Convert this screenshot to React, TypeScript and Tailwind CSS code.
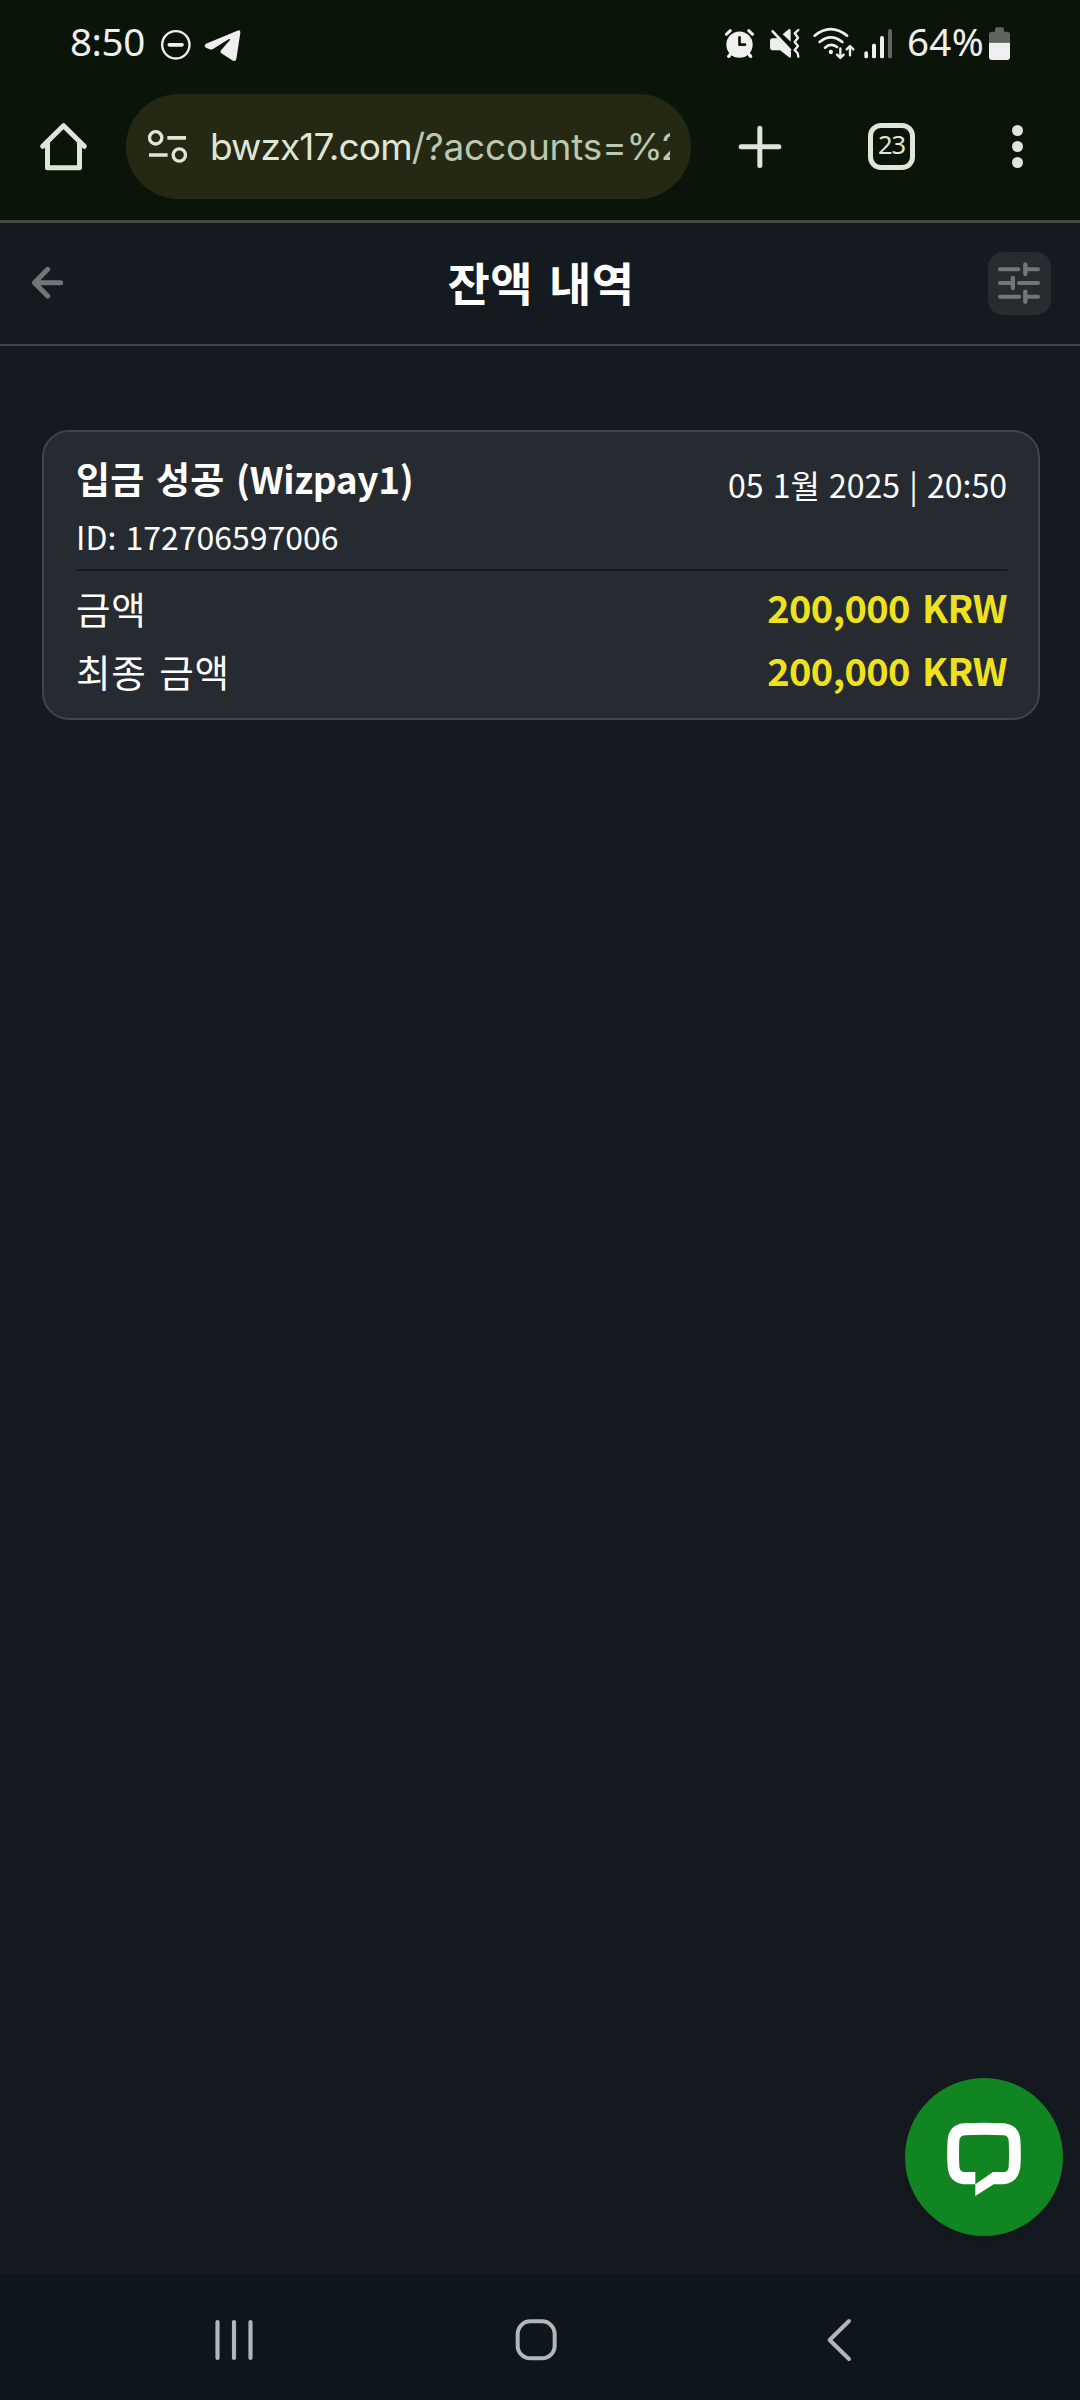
import type { ReactNode } from 'react';

type GlyphProps = { box: string; className: string; children: ReactNode };

function Glyph({ box, className, children }: GlyphProps) {
  return (
    <svg viewBox={box} className={`block shrink-0 ${className}`} fill="none" strokeLinecap="round" strokeLinejoin="round">
      {children}
    </svg>
  );
}

function StatusBar() {
  return (
    <div className="flex h-[84px] items-start pl-[70px] pr-[69px] text-[#efefef]">
      <div className="flex h-[82px] w-[79px] items-center font-['Noto_Sans',sans-serif] text-[38.5px] leading-none tracking-[-0.4px]">
        8:50
      </div>
      <Glyph box="477 75 102 120" className="ml-[10px] mt-[25px] h-[40px] w-[34px]">
        <circle cx="527.5" cy="134.500" r="41" stroke="currentColor" strokeWidth="7" />
        <path d="M508 134.500H546" stroke="currentColor" strokeWidth="11" />
      </Glyph>
      <Glyph box="609 75 117 120" className="ml-[10px] mt-[25px] h-[40px] w-[39px]">
        <path
          d="M618 131L712 92Q722 88 721 98L709 177Q707 186 699 182L664 160Q659 157 663 151L690 120Q691 116 686 118L640 146Q635 150 629 148L618 143Q610 136 618 131Z"
          fill="currentColor"
        />
      </Glyph>

      <Glyph box="69 75 102 120" className="ml-auto mt-[25px] h-[40px] w-[34px]">
        <circle cx="118.500" cy="134" r="39.500" fill="currentColor" />
        <path d="M79 103L91 92M158 103L146 92" stroke="currentColor" strokeWidth="9" />
        <path d="M92 162L86 169M146 162L152 169" stroke="currentColor" strokeWidth="10" />
        <path d="M118.500 112V134H135" stroke="#0a1409" strokeWidth="8" />
      </Glyph>
      <Glyph box="207 75 96 120" className="ml-[12px] mt-[25px] h-[40px] w-[32px]">
        <path d="M216 115H233L273 156V170Q272 175 267 172L240 151H217Q210 149 210 143V122Q210 116 216 115Z" fill="currentColor" />
        <path d="M218 94L270 150" stroke="currentColor" strokeWidth="8" />
        <path d="M248 103L267 87Q272 86 272 91V125Z" fill="currentColor" />
        <path d="M295 90L284 100L294 113L284 126L294 138L284 150L293 160L295 170" stroke="currentColor" strokeWidth="7" />
      </Glyph>
      <Glyph box="336 75 132 120" className="ml-[11px] mt-[25px] h-[40px] w-[44px]">
        <path d="M344 107Q392 68 441 107M359 126Q392 98 427 126M375 143Q392 127 411 141" stroke="currentColor" strokeWidth="8" />
        <circle cx="392.500" cy="156" r="6.500" fill="currentColor" />
        <path d="M421 145V173M411 164L421 174L431 164M450 166V139M440 148L450 138L460 148" stroke="currentColor" strokeWidth="7" />
      </Glyph>
      <Glyph box="489 75 90 120" className="ml-[7px] mt-[25px] h-[40px] w-[30px]">
        <g fill="currentColor">
          <rect x="493" y="154" width="11" height="21" rx="5" />
          <rect x="516" y="131" width="12" height="44" rx="5" />
          <rect x="540" y="108" width="12" height="67" rx="5" />
        </g>
        <rect x="564" y="87" width="12" height="88" rx="5" fill="#60665f" />
      </Glyph>
      <div className="ml-[14px] flex h-[82px] w-[79px] items-center font-['Noto_Sans',sans-serif] text-[38.5px] leading-none tracking-[0.3px]">
        64%
      </div>
      <Glyph box="864 75 69 120" className="ml-[2px] mt-[25px] h-[40px] w-[23px]">
        <path d="M867 128V103Q867 95 876 95H885V88Q885 82 891 82H906Q912 82 912 88V95H921Q930 95 930 103V128Z" fill="#60665f" />
        <path d="M867 128H930V171Q930 180 921 180H876Q867 180 867 171Z" fill="currentColor" />
      </Glyph>
    </div>
  );
}

function AddressBar() {
  return (
    <div className="flex h-[125px] items-center text-[#dfe6d6]">
      <Glyph box="117 366 147 147" className="ml-[39px] h-[49px] w-[49px]">
        <path d="M128 439L190.500 377L253 439" stroke="currentColor" strokeWidth="15" />
        <path d="M142.500 425V503H238.500V425" stroke="currentColor" strokeWidth="15" />
      </Glyph>
      <div className="ml-[38px] flex h-[105px] w-[565px] items-center rounded-full bg-[#252914]">
        <Glyph box="441 387 123 105" className="ml-[21px] h-[35px] w-[41px]">
          <circle cx="467" cy="413.500" r="18.500" stroke="currentColor" strokeWidth="10" />
          <circle cx="538" cy="465" r="18.500" stroke="currentColor" strokeWidth="10" />
          <path d="M502 413.500H558M447 465H503" stroke="currentColor" strokeWidth="11" strokeLinecap="butt" />
        </Glyph>
        <div className="ml-[22px] w-[460px] overflow-hidden whitespace-nowrap font-['Inter',sans-serif] text-[37px] leading-[60px]">
          <span className="tracking-[-0.9px]">bwzx17.com</span>
          <span className="tracking-[-0.2px] text-[#bac8ae]">
            /?accounts=<span className="tracking-[-2px]">%2</span>
          </span>
        </div>
      </div>
      <Glyph box="113 374 132 132" className="ml-[47px] h-[44px] w-[44px]">
        <path d="M122.500 439.500H235.500M178.500 383.500V495.500" stroke="currentColor" strokeWidth="15" />
      </Glyph>
      <div className="ml-[86px] flex h-[47px] w-[47px] items-center justify-center rounded-[13px] border-[5px] border-current pb-[3px] font-['Noto_Sans',sans-serif] text-[25.500px] leading-none tracking-[-1px]">
        23
      </div>
      <div className="ml-[97px] flex flex-col gap-[5px]">
        <i className="size-[11px] rounded-full bg-current" />
        <i className="size-[11px] rounded-full bg-current" />
        <i className="size-[11px] rounded-full bg-current" />
      </div>
    </div>
  );
}

function PageHeader() {
  return (
    <header className="flex h-[123px] items-center justify-between border-b-2 border-[#444646] pb-[1px] pl-[31px] pr-[29px]">
      <Glyph box="93 165 99 102" className="mr-[30px] h-[34px] w-[33px] text-[#757575]">
        <path d="M182 215H105M143 175L103.500 215L143 255" stroke="currentColor" strokeWidth="15" />
      </Glyph>
      <h1 className="mb-[5px] text-[46px] font-bold leading-[72px] tracking-[0.5px] text-white [word-spacing:5px]">잔액 내역</h1>
      <button className="flex size-[63px] items-center justify-center rounded-[15px] bg-[#262b30] text-[#757575]">
        <Glyph box="198 147 138 138" className="h-[46px] w-[46px]">
          <path
            d="M210 175H265M290 175H324M210 216H248M267 216H324M210 257H267M286 257H324"
            stroke="currentColor"
            strokeWidth="12"
          />
          <path d="M286 160V189M248.500 201V231M286 242V272" stroke="currentColor" strokeWidth="13" />
        </Glyph>
      </button>
    </header>
  );
}

function AmountRow({ label, value }: { label: string; value: string }) {
  return (
    <div className="flex h-[63px] items-center justify-between">
      <span className="mt-[3px] text-[37.5px] leading-none tracking-[0.8px] [word-spacing:3.5px]">{label}</span>
      <span className="text-[38px] font-bold leading-none tracking-[-0.6px] text-[#f0e11f] [word-spacing:4px]">{value}</span>
    </div>
  );
}

function TransactionCard() {
  return (
    <article className="ml-[42px] mr-[40px] mt-[84px] h-[290px] rounded-[27px] border-2 border-[#434444] bg-[#262b31] pl-[32px] pr-[31px] text-white">
      <div className="flex h-[137px] flex-col pt-[16px]">
        <div className="flex h-[61px] items-center justify-between">
          <h2 className="text-[37px] font-bold leading-none tracking-[0.3px] [word-spacing:2.6px]">
            입금 성공 <span className="tracking-[-0.3px]">(Wizpay1)</span>
          </h2>
          <span className="mt-[11px] text-[32px] leading-none [word-spacing:2px]">05 1월 2025 | 20:50</span>
        </div>
        <span className="mt-[2px] text-[32px] leading-[50px] [word-spacing:2px]">ID: 172706597006</span>
      </div>
      <div className="h-[2px] bg-[#151a20]" />
      <div className="pt-[4px]">
        <AmountRow label="금액" value="200,000 KRW" />
        <AmountRow label="최종 금액" value="200,000 KRW" />
      </div>
    </article>
  );
}

function ChatButton() {
  return (
    <button className="absolute left-[905px] top-[2078px] flex size-[158px] items-center justify-center rounded-full bg-[#118522] shadow-[0_6px_16px_rgba(0,0,0,0.12)]">
      <Glyph box="195 210 234 234" className="mt-[4px] h-[78px] w-[78px]">
        <path
          fillRule="evenodd"
          fill="#fff"
          d="M250 220Q312 217 375 220Q418 228 421 268Q424 312 421 352Q415 397 372 403L341 403L286 438V403L250 403Q207 397 203 352Q200 312 203 268Q208 225 250 220ZM254 256Q312 252 372 256Q384 258 386 270Q388 312 386 350Q385 364 373 366L339 366L286 403V366L252 366Q240 364 238 350Q236 310 238 270Q240 258 254 256Z"
        />
      </Glyph>
    </button>
  );
}

function NavigationBar() {
  return (
    <nav className="flex h-[126px] items-center bg-[#0e151b] pb-px pt-[6px] text-[#b4b7b9]">
      <Glyph box="102 204 120 132" className="ml-[214px] h-[44px] w-[40px]">
        <path d="M112.500 216V324M162 216V324M211.500 216V324" stroke="currentColor" strokeWidth="12.500" />
      </Glyph>
      <Glyph box="1002 204 132 132" className="ml-[260px] h-[44px] w-[44px]">
        <rect x="1013" y="214" width="111" height="111" rx="38" stroke="currentColor" strokeWidth="12" />
      </Glyph>
      <Glyph box="138 204 78 132" className="ml-[268px] h-[44px] w-[26px]">
        <path d="M207 213L149 270L207 327" stroke="currentColor" strokeWidth="12" />
      </Glyph>
    </nav>
  );
}

export default function App() {
  return (
    <div className="relative flex h-[2400px] w-[1080px] flex-col overflow-hidden bg-[#151a20] font-['Noto_Sans_CJK_KR',sans-serif]">
      <div className="h-[223px] border-b-[3px] border-[#404b3c] bg-[#0a1409]">
        <StatusBar />
        <AddressBar />
      </div>
      <PageHeader />
      <main className="flex-1">
        <TransactionCard />
      </main>
      <NavigationBar />
      <ChatButton />
    </div>
  );
}
